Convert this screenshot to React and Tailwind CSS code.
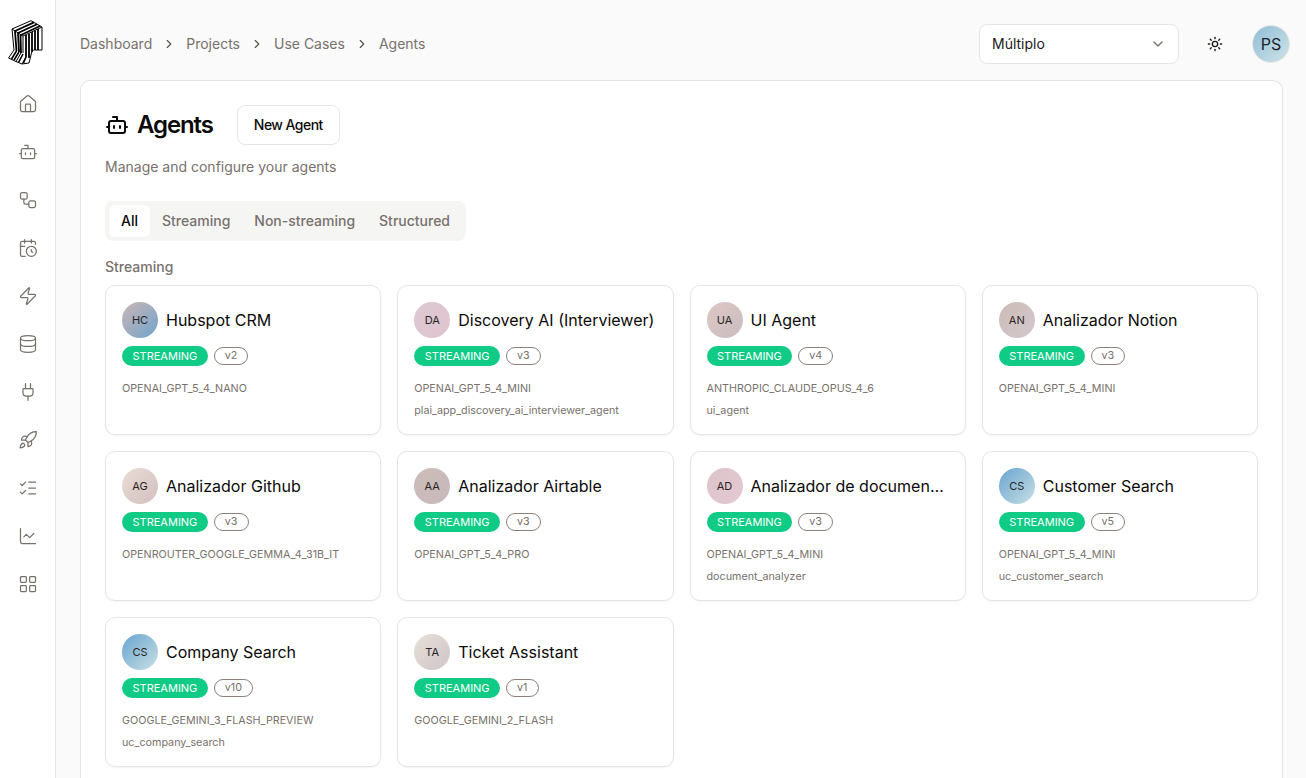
import React from 'react'
import {
  House, Bot, Workflow, CalendarClock, Zap, Database, Plug, Rocket,
  ListChecks, ChartLine, LayoutGrid, Sun, ChevronDown, ChevronRight,
} from 'lucide-react'

const NAV = [House, Bot, Workflow, CalendarClock, Zap, Database, Plug, Rocket, ListChecks, ChartLine, LayoutGrid]
const CRUMBS = ['Dashboard', 'Projects', 'Use Cases', 'Agents']
const TABS = ['Streaming', 'Non-streaming', 'Structured']

const AGENTS = [
  { initials: 'HC', name: 'Hubspot CRM', version: 'v2', model: 'OPENAI_GPT_5_4_NANO', gradient: 'from-[#ccb4b4] to-[#6ba3cc]' },
  { initials: 'DA', name: 'Discovery AI (Interviewer)', version: 'v3', model: 'OPENAI_GPT_5_4_MINI', slug: 'plai_app_discovery_ai_interviewer_agent', gradient: 'from-[#dcc8d0] to-[#e0c4d0]' },
  { initials: 'UA', name: 'UI Agent', version: 'v4', model: 'ANTHROPIC_CLAUDE_OPUS_4_6', slug: 'ui_agent', gradient: 'from-[#dcc8c4] to-[#ccbcc0]' },
  { initials: 'AN', name: 'Analizador Notion', version: 'v3', model: 'OPENAI_GPT_5_4_MINI', gradient: 'from-[#ccbcb8] to-[#d4c8cc]' },
  { initials: 'AG', name: 'Analizador Github', version: 'v3', model: 'OPENROUTER_GOOGLE_GEMMA_4_31B_IT', gradient: 'from-[#e8dcd4] to-[#d4c0c0]' },
  { initials: 'AA', name: 'Analizador Airtable', version: 'v3', model: 'OPENAI_GPT_5_4_PRO', gradient: 'from-[#ccbcb8] to-[#c8b8bc]' },
  { initials: 'AD', name: 'Analizador de documentos', version: 'v3', model: 'OPENAI_GPT_5_4_MINI', slug: 'document_analyzer', gradient: 'from-[#dcc4c8] to-[#e4c8d4]' },
  { initials: 'CS', name: 'Customer Search', version: 'v5', model: 'OPENAI_GPT_5_4_MINI', slug: 'uc_customer_search', gradient: 'from-[#68a4d0] to-[#c8e0e4]' },
  { initials: 'CS', name: 'Company Search', version: 'v10', model: 'GOOGLE_GEMINI_3_FLASH_PREVIEW', slug: 'uc_company_search', gradient: 'from-[#68a4d0] to-[#c8e0e4]' },
  { initials: 'TA', name: 'Ticket Assistant', version: 'v1', model: 'GOOGLE_GEMINI_2_FLASH', gradient: 'from-[#e8e0d8] to-[#d0c4c8]' },
]

function Logo() {
  return (
    <svg width="36" height="45" viewBox="0 0 36 45" fill="none" stroke="#000" strokeLinejoin="round">
      {/* top face */}
      <path d="M4 9 L23 0.7 L34 7 L15 16 Z" strokeWidth="1" />
      <path d="M7 11 L26 2.4 M10 13 L29 4.2 M13 15 L32 6" strokeWidth="1.8" />
      {/* front faces */}
      <path d="M4 9 L6 30 M15 16 L15 33 M34 7 L34 30 L26.5 30 C25 30 24 31 23.5 33 L21 43" strokeWidth="1" />
      <path d="M7 11 L8.5 31 M10 13 L11 32 M12.5 14.5 L13 33 M18 15 L18 37 M21 13.5 L21 38 M24 12 L24 32 M27 10.5 L27 30 M30 9 L30 30" strokeWidth="1.8" />
      {/* legs */}
      <path d="M6 30 L0.5 38 L8 41.5 L13 33 M8 41.5 L14 44 L18 37 M14 44 L21 43" strokeWidth="1" />
      <path d="M8.5 31 L3.5 39 M11 32 L6 40 M15 34 L10.5 42.5 M18 37 L15.5 43" strokeWidth="1.6" />
    </svg>
  )
}

function AgentCard({ agent }) {
  return (
    <div className="h-[150px] rounded-[10px] border border-[#e7e5e4] bg-white px-4 pt-4 shadow-[0_1px_2px_rgba(0,0,0,0.05)]">
      <div className="flex items-center gap-2">
        <div className={`flex h-9 w-9 shrink-0 items-center justify-center rounded-full bg-gradient-to-br text-[11px] text-[#292524] ${agent.gradient}`}>
          {agent.initials}
        </div>
        <div className="min-w-0 truncate text-base text-[#0c0a09]">{agent.name}</div>
      </div>
      <div className="mt-2 flex items-center gap-1.5">
        <span className="flex h-5 items-center rounded-full bg-[#10cb86] px-[10.5px] text-[11px] leading-none text-white">STREAMING</span>
        <span className="flex h-[18px] items-center rounded-full border border-[#8a817c] px-[10px] text-[10.75px] leading-none text-[#78716c]">{agent.version}</span>
      </div>
      <div className="mt-4 text-[10.75px] leading-[14px] text-[#78716c]">{agent.model}</div>
      {agent.slug && <div className="mt-2 text-[10.75px] leading-[14px] text-[#78716c]">{agent.slug}</div>}
    </div>
  )
}

export default function App() {
  return (
    <div className="flex h-screen overflow-hidden bg-[#fafafa] font-['Inter',sans-serif]">
      {/* Sidebar */}
      <aside className="flex w-[56px] shrink-0 flex-col items-center border-r border-[#e7e5e4] bg-white">
        <div className="mt-[20px] mb-[29px] -ml-[3px]">
          <Logo />
        </div>
        <nav className="flex flex-col items-center gap-7">
          {NAV.map((Icon, i) => (
            <Icon key={i} size={20} strokeWidth={1.5} className="text-[#78716c]" />
          ))}
        </nav>
      </aside>

      <div className="flex min-w-0 flex-1 flex-col pr-[23px] pl-6">
        {/* Top bar */}
        <header className="flex h-20 shrink-0 items-center justify-between pt-2">
          <div className="flex items-center gap-[10px] text-sm text-[#78716c]">
            {CRUMBS.map((crumb, i) => (
              <React.Fragment key={crumb}>
                {i > 0 && <ChevronRight size={14} className="text-[#57534e]" />}
                <span>{crumb}</span>
              </React.Fragment>
            ))}
          </div>
          <div className="-mr-[7px] flex items-center">
            <div className="flex h-10 w-[200px] items-center justify-between rounded-lg border border-[#e7e5e4] bg-white px-3 text-sm text-[#1c1917]">
              <span>Múltiplo</span>
              <ChevronDown size={16} className="text-[#78716c]" />
            </div>
            <Sun size={16} className="ml-7 text-[#1c1917]" />
            <div className="ml-[29px] flex h-[38px] w-[38px] items-center justify-center rounded-full border border-[#e7e5e4] bg-gradient-to-br from-[#8fbdd6] to-[#cfe4e8] text-base text-[#1c2430]">
              PS
            </div>
          </div>
        </header>

        {/* Panel */}
        <main className="flex-1 rounded-t-[10px] border border-b-0 border-[#e7e5e4] bg-white px-6 pt-6">
          <div className="flex items-center">
            <Bot size={24} strokeWidth={2} className="text-[#0c0a09]" />
            <h1 className="ml-2 text-2xl font-semibold tracking-[-1.1px] text-[#0c0a09]">Agents</h1>
            <button className="ml-6 h-10 rounded-lg border border-[#e7e5e4] bg-white px-4 text-sm font-medium tracking-[-0.55px] text-[#0c0a09]">
              New Agent
            </button>
          </div>
          <p className="mt-3 text-sm leading-5 text-[#78716c]">Manage and configure your agents</p>

          <div className="mt-6 flex h-10 w-fit items-center rounded-lg bg-[#f5f5f4] p-1 text-sm font-medium text-[#78716c]">
            <span className="flex h-8 items-center rounded-md bg-white px-3 text-[#0c0a09]">All</span>
            {TABS.map(tab => (
              <span key={tab} className="flex h-8 items-center px-3">{tab}</span>
            ))}
          </div>

          <h2 className="mt-4 text-sm leading-5 font-medium text-[#78716c]">Streaming</h2>
          <div className="mt-2 grid grid-cols-4 gap-4">
            {AGENTS.map(agent => (
              <AgentCard key={agent.name} agent={agent} />
            ))}
          </div>
        </main>
      </div>
    </div>
  )
}
